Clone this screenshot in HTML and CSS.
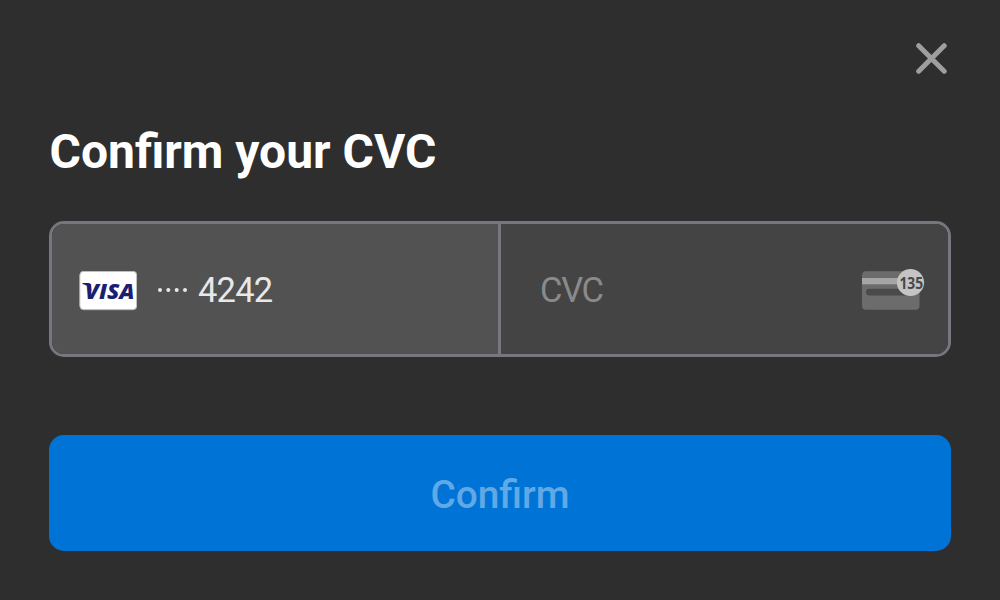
FILE: index.html
```html
<!DOCTYPE html>
<html lang="en">
<head>
<meta charset="utf-8">
<title>Confirm your CVC</title>
<link rel="stylesheet" href="styles.css">
</head>
<body>
<main class="dialog">
  <header class="top">
    <button class="close" aria-label="Close">
      <svg width="32" height="32" viewBox="0 0 32 32"><path d="M3.700 3.700 29.200 29.200M29.200 3.700 3.700 29.200"/></svg>
    </button>
  </header>
  <h1 class="title">Confirm your CVC</h1>
  <div class="fields">
    <div class="card">
      <svg class="visa" width="58" height="40" viewBox="0 0 58 40">
        <rect class="visa-bg" x=".8" y=".3" width="57" height="38.4" rx="4"/>
        <text class="visa-text" x="6" y="27.600" textLength="49.500" lengthAdjust="spacingAndGlyphs">VISA</text>
        <path class="visa-flag" d="M3.500 12.100H9.500Q11.500 12.100 12 14.500L12.500 20Q9.500 14.200 3.500 13z"/>
      </svg>
      <svg class="dots" width="32" height="6" viewBox="0 0 32 6"><circle cx="3" cy="3" r="2"/><circle cx="11.300" cy="3" r="2"/><circle cx="19.700" cy="3" r="2"/><circle cx="28" cy="3" r="2"/></svg>
      <span class="number">4242</span>
    </div>
    <div class="cvc">
      <span class="placeholder">CVC</span>
      <svg class="cvc-icon" width="64" height="44" viewBox="0 0 64 44">
        <rect x="1" y="4.300" width="57.500" height="38.500" rx="4" fill="#6c6c6c"/>
        <rect x="1" y="11" width="57.500" height="6.300" fill="#a5a5a5"/>
        <rect x="5" y="21.800" width="48" height="6.700" rx="3" fill="#4a4a4a"/>
        <circle cx="49.500" cy="15.500" r="13.600" fill="#c4c4c4"/>
        <text class="digits" x="38.400" y="21.500" textLength="23.700" lengthAdjust="spacingAndGlyphs">135</text>
      </svg>
    </div>
  </div>
  <button class="confirm">Confirm</button>
</main>
</body>
</html>
```
FILE: styles.css
```css
* {
  box-sizing: border-box;
}

body {
  margin: 0;
  background: #2e2e2e;
  font-family: Roboto, sans-serif;
}

.dialog {
  height: 600px;
  padding: 42px 49px 49px;
  display: flex;
  flex-direction: column;
}

.top {
  display: flex;
  justify-content: flex-end;
  padding-right: 4px;
}

.close {
  display: flex;
  padding: 0;
  border: 0;
  background: none;
}

.close path {
  fill: none;
  stroke: #9e9e9e;
  stroke-width: 5;
  stroke-linecap: round;
}

.title {
  margin: 50px 0 0;
  padding-left: .5px;
  height: 56px;
  font-size: 48px;
  line-height: 56px;
  font-weight: 700;
  color: #fff;
  white-space: nowrap;
}

.fields {
  display: flex;
  height: 136px;
  margin-top: 41px;
  border: 3px solid #787780;
  border-radius: 15px;
  overflow: hidden;
}

.card,
.cvc {
  display: flex;
  align-items: center;
  font-size: 34.5px;
  letter-spacing: -1px;
}

.card {
  width: 449px;
  padding: 2px 0 0 27px;
  border-right: 3px solid #787780;
  background: #525252;
  color: #e8e8e8;
}

.visa {
  margin-top: 2px;
}

.visa-bg {
  fill: #fff;
  stroke: #b8b8b8;
}

.visa-text {
  font: italic 800 21.5px "Open Sans", sans-serif;
  letter-spacing: 0;
  fill: #1a1f71;
}

.visa-flag {
  fill: #1a1f71;
}

.dots {
  margin-left: 20px;
  fill: #e8e8e8;
}

.number {
  margin-left: 9px;
  letter-spacing: -.8px;
}

.cvc {
  flex: 1;
  justify-content: space-between;
  padding: 2px 23px 0 39px;
  background: #444;
}

.placeholder {
  color: #8a8a8a;
  letter-spacing: -1.3px;
}

.cvc-icon {
  margin-bottom: 2px;
  overflow: visible;
}

.digits {
  font: 700 16px "Noto Sans", sans-serif;
  letter-spacing: 0;
  fill: #484848;
}

.confirm {
  height: 116.5px;
  margin-top: 77.5px;
  padding: 3px 0 0;
  border: 0;
  border-radius: 15px;
  background: #0074d6;
  color: #61a9e6;
  font: 500 38.8px Roboto, sans-serif;
}
```
